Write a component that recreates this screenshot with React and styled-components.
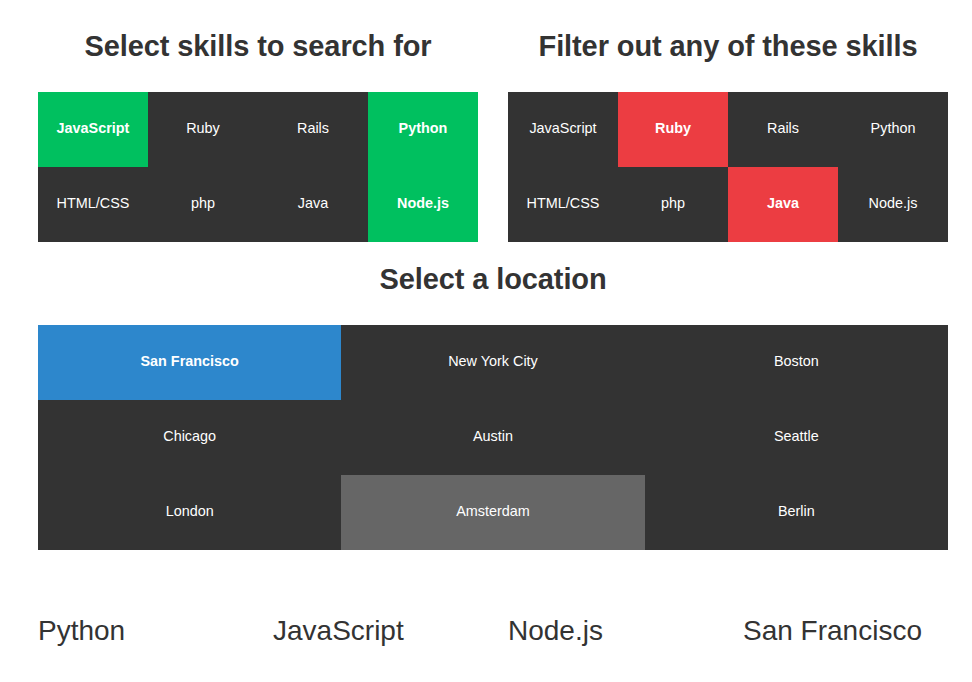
import React from "react";
import styled, { createGlobalStyle } from "styled-components";

const Global = createGlobalStyle`
  html, body { margin: 0; padding: 0; background: #fff; }
  body { font-family: "Liberation Sans", Arial, Helvetica, sans-serif; color: #333; }
`;

const Page = styled.div`
  width: 910px;
  padding: 30px 0 0 38px;
`;

const Row = styled.div`
  display: flex;
  gap: 30px;
`;

const Section = styled.section`
  flex: 1;
  display: flex;
  flex-direction: column;
  margin-top: ${(p) => p.$top || 0}px;
`;

const Heading = styled.h2`
  margin: 0;
  height: 32px;
  line-height: 32px;
  font-size: 29px;
  font-weight: 700;
  text-align: center;
  color: #333;
  letter-spacing: -0.1px;
`;

const Grid = styled.div`
  display: grid;
  grid-template-columns: repeat(${(p) => p.$cols}, 1fr);
  grid-auto-rows: 75px;
  background: #333;
  margin-top: 30px;
`;

const colors = {
  green: "#00c05f",
  red: "#ec3d42",
  blue: "#2d87cc",
  gray: "#666666",
};

const Cell = styled.div`
  display: flex;
  align-items: center;
  justify-content: center;
  padding-bottom: 4px;
  font-size: 14.4px;
  color: #fff;
  font-weight: ${(p) => (p.$state && p.$state !== "gray" ? 700 : 400)};
  background: ${(p) => (p.$state ? colors[p.$state] : "#333")};
  cursor: pointer;
`;

const Results = styled.div`
  display: grid;
  grid-template-columns: repeat(4, 235px);
  margin-top: 65px;
`;

const Result = styled.div`
  font-size: 28px;
  line-height: 32px;
  color: #333;
`;

const skills = ["JavaScript", "Ruby", "Rails", "Python", "HTML/CSS", "php", "Java", "Node.js"];
const selected = { JavaScript: "green", Python: "green", "Node.js": "green" };
const filtered = { Ruby: "red", Java: "red" };
const locations = [
  "San Francisco",
  "New York City",
  "Boston",
  "Chicago",
  "Austin",
  "Seattle",
  "London",
  "Amsterdam",
  "Berlin",
];
const locState = { "San Francisco": "blue", Amsterdam: "gray" };

export default function App() {
  return (
    <>
      <Global />
      <Page>
        <Row>
          <Section>
            <Heading>Select skills to search for</Heading>
            <Grid $cols={4}>
              {skills.map((s) => (
                <Cell key={s} $state={selected[s]}>{s}</Cell>
              ))}
            </Grid>
          </Section>
          <Section>
            <Heading>Filter out any of these skills</Heading>
            <Grid $cols={4}>
              {skills.map((s) => (
                <Cell key={s} $state={filtered[s]}>{s}</Cell>
              ))}
            </Grid>
          </Section>
        </Row>
        <Section $top={21}>
          <Heading>Select a location</Heading>
          <Grid $cols={3}>
            {locations.map((l) => (
              <Cell key={l} $state={locState[l]}>{l}</Cell>
            ))}
          </Grid>
        </Section>
        <Results>
          <Result>Python</Result>
          <Result>JavaScript</Result>
          <Result>Node.js</Result>
          <Result>San Francisco</Result>
        </Results>
      </Page>
    </>
  );
}
